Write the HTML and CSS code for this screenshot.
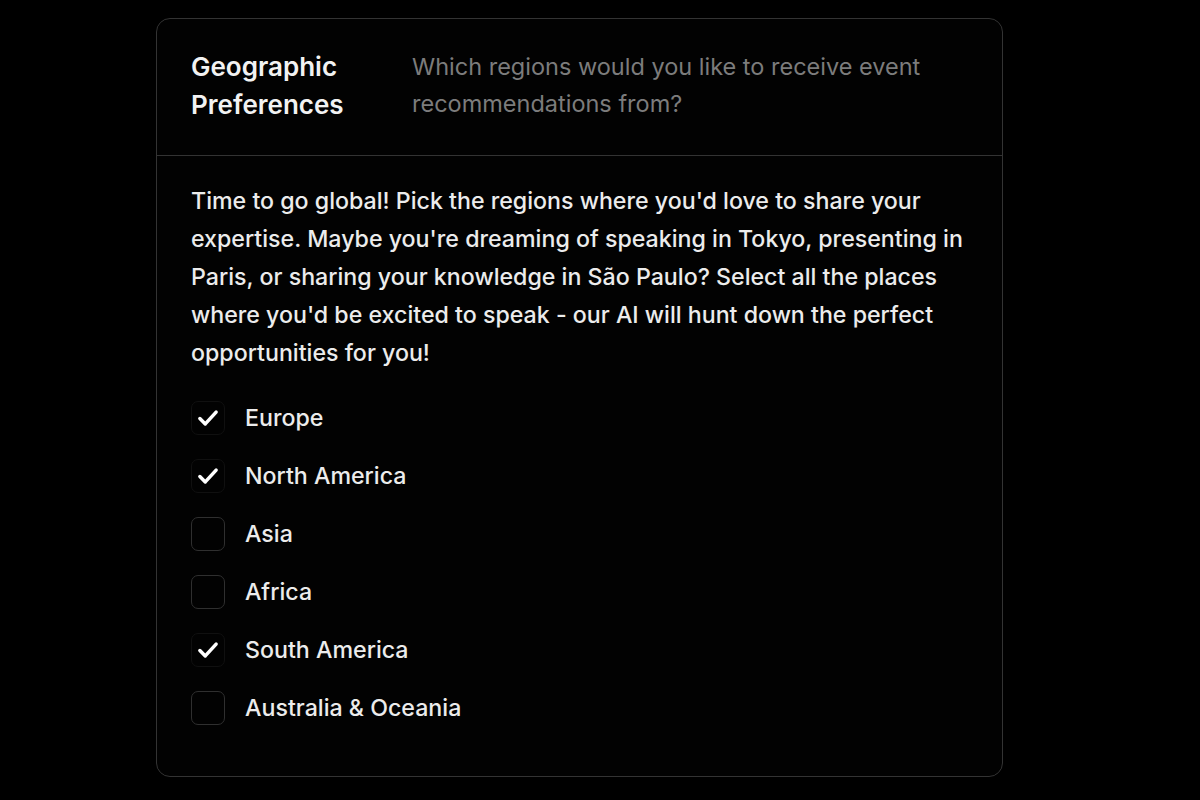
FILE: index.html
```html
<!DOCTYPE html>
<html lang="en">
<head>
<meta charset="utf-8">
<title>Geographic Preferences</title>
<link rel="stylesheet" href="styles.css">
</head>
<body>
<main class="page">
  <section class="card">
    <header class="card-header">
      <h2 class="card-title">Geographic Preferences</h2>
      <p class="card-subtitle">Which regions would you like to receive event recommendations from?</p>
    </header>
    <div class="card-body">
      <p class="intro">Time to go global! Pick the regions where you'd love to share your expertise. Maybe you're dreaming of speaking in Tokyo, presenting in Paris, or sharing your knowledge in São Paulo? Select all the places where you'd be excited to speak - our AI will hunt down the perfect opportunities for you!</p>
      <ul class="options">
        <li class="option"><span class="box checked"><svg viewBox="0 0 24 24"><path d="M4.5 12.5l5 5 10-11"/></svg></span><span class="label">Europe</span></li>
        <li class="option"><span class="box checked"><svg viewBox="0 0 24 24"><path d="M4.5 12.5l5 5 10-11"/></svg></span><span class="label">North America</span></li>
        <li class="option"><span class="box"></span><span class="label">Asia</span></li>
        <li class="option"><span class="box"></span><span class="label">Africa</span></li>
        <li class="option"><span class="box checked"><svg viewBox="0 0 24 24"><path d="M4.5 12.5l5 5 10-11"/></svg></span><span class="label">South America</span></li>
        <li class="option"><span class="box"></span><span class="label">Australia &amp; Oceania</span></li>
      </ul>
    </div>
  </section>
</main>
</body>
</html>
```
FILE: styles.css
```css
html, body {
  margin: 0;
  padding: 0;
  background: #000;
}
body {
  font-family: Inter, "Noto Sans", sans-serif;
  color: #ececec;
}
.page {
  display: flex;
  justify-content: flex-start;
  padding: 18px 0 0 156px;
}
.card {
  width: 847px;
  border: 1px solid #333;
  border-radius: 14px;
  background: #020202;
  box-sizing: border-box;
}
.card-header {
  display: grid;
  grid-template-columns: 185px 1fr;
  column-gap: 36px;
  padding: 29px 34px 31px;
  border-bottom: 1px solid #333;
}
.card-title {
  margin: 0;
  font-size: 26px;
  font-weight: 600;
  line-height: 38px;
  color: #f2f2f2;
}
.card-subtitle {
  margin: 0;
  font-size: 23.5px;
  line-height: 37px;
  font-weight: 400;
  color: #7c7c7c;
}
.card-body {
  padding: 26px 34px 51px;
}
.intro {
  margin: 0;
  font-size: 23.2px;
  line-height: 38px;
  font-weight: 500;
  color: #ececec;
}
.options {
  list-style: none;
  margin: 29px 0 0;
  padding: 0;
  display: flex;
  flex-direction: column;
  gap: 24px;
}
.option {
  display: flex;
  align-items: center;
  gap: 20px;
  height: 34px;
}
.box {
  width: 32px;
  height: 32px;
  border: 1px solid #2f2f2f;
  border-radius: 7px;
  display: flex;
  align-items: center;
  justify-content: center;
  flex: none;
}
.box.checked {
  border-color: #101010;
  background: #020202;
}
.box svg {
  width: 26px;
  height: 26px;
  fill: none;
  stroke: #fff;
  stroke-width: 3.2;
  stroke-linecap: round;
  stroke-linejoin: round;
}
.label {
  font-size: 23.2px;
  font-weight: 500;
  color: #ececec;
}
```
